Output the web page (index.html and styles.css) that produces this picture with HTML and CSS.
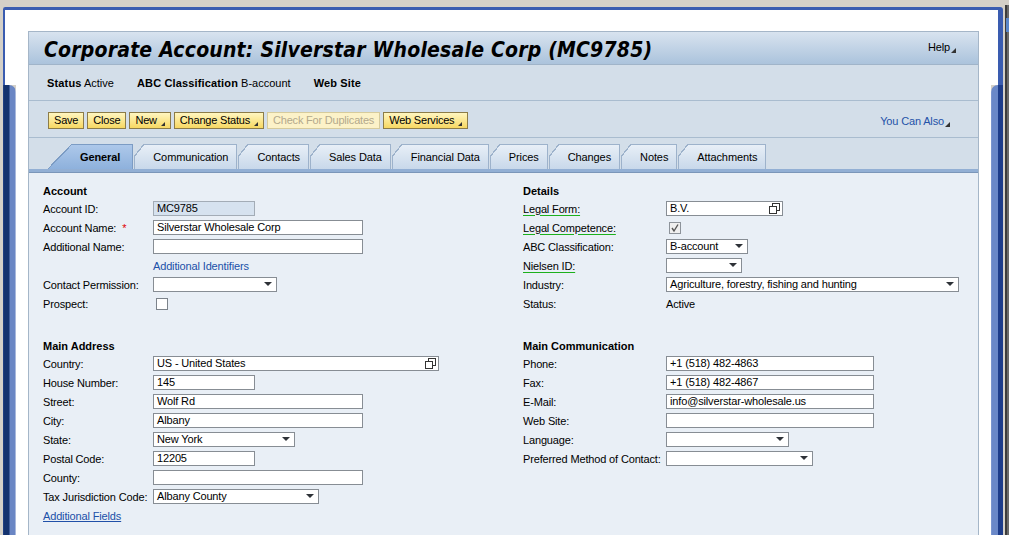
FILE: index.html
```html
<!DOCTYPE html>
<html>
<head>
<meta charset="utf-8">
<link rel="stylesheet" href="styles.css">
</head>
<body>
<div class="screen">
  <div class="win">
    <div class="win-top"></div>
    <div class="win-main">
      <div class="rail rail-l"><div class="rail-thin"></div><div class="rail-thick"></div></div>
      <div class="inner">
        <div class="panel">
          <div class="titlebar">
            <div class="title">Corporate Account: Silverstar Wholesale Corp (MC9785)</div>
            <div class="help">Help<span class="tri"></span></div>
          </div>
          <div class="statusbar">
            <span class="st"><b>Status</b> Active</span>
            <span class="st"><b>ABC Classification</b> B-account</span>
            <span class="st"><b>Web Site</b></span>
          </div>
          <div class="toolbar">
            <div class="btns">
              <span class="btn">Save</span>
              <span class="btn">Close</span>
              <span class="btn">New<span class="tri"></span></span>
              <span class="btn">Change Status<span class="tri"></span></span>
              <span class="btn disabled">Check For Duplicates</span>
              <span class="btn">Web Services<span class="tri"></span></span>
            </div>
            <div class="alsol">You Can Also<span class="tri"></span></div>
          </div>
          <div class="tabrow">
            <span class="tab sel">General</span>
            <span class="tab">Communication</span>
            <span class="tab">Contacts</span>
            <span class="tab">Sales Data</span>
            <span class="tab">Financial Data</span>
            <span class="tab">Prices</span>
            <span class="tab">Changes</span>
            <span class="tab">Notes</span>
            <span class="tab">Attachments</span>
          </div>
          <div class="band"></div>
          <div class="content">
            <div class="sec sec-l">
              <div class="hd">Account</div>
              <div class="row"><span class="lbl">Account ID:</span><span class="inp ro" style="width:102px">MC9785</span></div>
              <div class="row"><span class="lbl">Account Name: <span class="req">*</span></span><span class="inp" style="width:210px">Silverstar Wholesale Corp</span></div>
              <div class="row"><span class="lbl">Additional Name:</span><span class="inp" style="width:210px"></span></div>
              <div class="row"><span class="lbl"></span><span class="link">Additional Identifiers</span></div>
              <div class="row"><span class="lbl">Contact Permission:</span><span class="inp dd" style="width:124px"><span class="arr"></span></span></div>
              <div class="row"><span class="lbl">Prospect:</span><span class="chk"></span></div>
            </div>
            <div class="sec sec-r">
              <div class="hd">Details</div>
              <div class="row"><span class="lbl"><span class="gl">Legal Form:</span></span><span class="inp vh" style="width:117px">B.V.<svg class="vhi" width="11" height="11" viewBox="0 0 11 11"><rect x="3.5" y="0.5" width="7" height="7" fill="#fff" stroke="#333"/><rect x="0.5" y="3.5" width="7" height="7" fill="#fff" stroke="#333"/></svg></span></div>
              <div class="row"><span class="lbl"><span class="gl">Legal Competence:</span></span><span class="chk on"><svg width="10" height="10" viewBox="0 0 10 10"><path d="M2 5 L4 8 L8 1.5" fill="none" stroke="#555" stroke-width="1.4"/></svg></span></div>
              <div class="row"><span class="lbl">ABC Classification:</span><span class="inp dd" style="width:82px">B-account<span class="arr"></span></span></div>
              <div class="row"><span class="lbl"><span class="gl">Nielsen ID:</span></span><span class="inp dd" style="width:76px"><span class="arr"></span></span></div>
              <div class="row"><span class="lbl">Industry:</span><span class="inp dd" style="width:293px">Agriculture, forestry, fishing and hunting<span class="arr"></span></span></div>
              <div class="row"><span class="lbl">Status:</span><span class="txt">Active</span></div>
            </div>
            <div class="sec sec-l">
              <div class="hd">Main Address</div>
              <div class="row"><span class="lbl">Country:</span><span class="inp vh" style="width:286px">US - United States<svg class="vhi" width="11" height="11" viewBox="0 0 11 11"><rect x="3.5" y="0.5" width="7" height="7" fill="#fff" stroke="#333"/><rect x="0.5" y="3.5" width="7" height="7" fill="#fff" stroke="#333"/></svg></span></div>
              <div class="row"><span class="lbl">House Number:</span><span class="inp" style="width:102px">145</span></div>
              <div class="row"><span class="lbl">Street:</span><span class="inp" style="width:210px">Wolf Rd</span></div>
              <div class="row"><span class="lbl">City:</span><span class="inp" style="width:210px">Albany</span></div>
              <div class="row"><span class="lbl">State:</span><span class="inp dd" style="width:142px">New York<span class="arr"></span></span></div>
              <div class="row"><span class="lbl">Postal Code:</span><span class="inp" style="width:102px">12205</span></div>
              <div class="row"><span class="lbl">County:</span><span class="inp" style="width:210px"></span></div>
              <div class="row"><span class="lbl">Tax Jurisdiction Code:</span><span class="inp dd" style="width:166px">Albany County<span class="arr"></span></span></div>
              <div class="row"><span class="link ul">Additional Fields</span></div>
            </div>
            <div class="sec sec-r">
              <div class="hd">Main Communication</div>
              <div class="row"><span class="lbl">Phone:</span><span class="inp" style="width:208px">+1 (518) 482-4863</span></div>
              <div class="row"><span class="lbl">Fax:</span><span class="inp" style="width:208px">+1 (518) 482-4867</span></div>
              <div class="row"><span class="lbl">E-Mail:</span><span class="inp" style="width:208px">info@silverstar-wholesale.us</span></div>
              <div class="row"><span class="lbl">Web Site:</span><span class="inp" style="width:208px"></span></div>
              <div class="row"><span class="lbl">Language:</span><span class="inp dd" style="width:123px"><span class="arr"></span></span></div>
              <div class="row"><span class="lbl">Preferred Method of Contact:</span><span class="inp dd" style="width:147px"><span class="arr"></span></span></div>
            </div>
          </div>
        </div>
      </div>
      <div class="rail rail-r"><div class="rail-thin"></div><div class="rail-thick"></div></div>
    </div>
  </div>
  <div class="edge"><div class="edge-blue"></div></div>
</div>
</body>
</html>
```
FILE: styles.css
```css
html, body {
  margin: 0;
  padding: 0;
}
body {
  background: #d4d0c8;
  width: 1009px;
  height: 535px;
  overflow: hidden;
  font-family: "Liberation Sans", Arial, sans-serif;
  font-size: 11px;
  letter-spacing: -0.15px;
  color: #000;
}
.screen {
  display: flex;
  width: 1009px;
  height: 535px;
}
.win {
  width: 1000px;
  margin-left: 3px;
  margin-top: 7px;
  display: flex;
  flex-direction: column;
}
.win-top {
  height: 3px;
  background: #3a5cb0;
  border-top-left-radius: 4px;
  border-top-right-radius: 5px;
}
.win-main {
  flex: 1;
  display: flex;
}
.rail {
  display: flex;
  flex-direction: column;
}
.rail-l { width: 13px; }
.rail-r { width: 12px; }
.rail-thin {
  height: 75px;
  background: #fff;
}
.rail-l .rail-thin { border-left: 2px solid #3a5cb0; }
.rail-r .rail-thin { border-right: 5px solid #3a5cb0; }
.rail-thick { flex: 1; }
.rail-l .rail-thick {
  background: linear-gradient(to right, #2a4a92 0, #14326e 1px, #14326e 6px, #6a86c4 7px, #6a86c4 12px, #a8b8dc 12px);
  border-top-right-radius: 7px;
}
.rail-r .rail-thick {
  background: linear-gradient(to right, #8aa2d4 0, #6a88c8 1px, #6a88c8 7px, #1d3c8a 7px, #1d3c8a 12px);
  border-top-left-radius: 7px;
}
.inner {
  flex: 1;
  background: #fff;
  padding: 21px 12px 0 12px;
  display: flex;
}
.panel {
  flex: 1;
  border: 1px solid #a5b6c8;
  border-bottom: none;
  display: flex;
  flex-direction: column;
  background: #d3dee9;
}
.titlebar {
  height: 32px;
  border-bottom: 1px solid #a0b4c9;
  background: linear-gradient(#d8e3ef, #abc3dc);
  display: flex;
  align-items: center;
  justify-content: space-between;
  padding: 0 22px 0 15px;
}
.title {
  font-family: "DejaVu Sans Condensed", "DejaVu Sans", sans-serif;
  font-stretch: semi-condensed;
  font-weight: bold;
  font-style: italic;
  font-size: 21px;
  letter-spacing: 0.2px;
  margin-top: 3px;
}
.help {
  font-size: 11px;
  margin-top: -2px;
}
.tri {
  display: inline-block;
  width: 0;
  height: 0;
  border-left: 5px solid transparent;
  border-bottom: 5px solid #333;
  margin-left: 1px;
  vertical-align: -2px;
}
.statusbar {
  height: 35px;
  border-bottom: 1px solid #a9bccf;
  display: flex;
  align-items: center;
  gap: 23px;
  padding-left: 18px;
  letter-spacing: 0;
}
.statusbar b { letter-spacing: 0.15px; }
.toolbar {
  height: 37px;
  border-bottom: 1px solid #a9bccf;
  display: flex;
  justify-content: space-between;
  padding: 11px 28px 0 19px;
  box-sizing: border-box;
}
.btns {
  display: flex;
  gap: 3px;
  height: 17px;
}
.btn {
  height: 17px;
  box-sizing: border-box;
  border: 1px solid #8c7c48;
  background: linear-gradient(#fff6c0, #f7d862);
  padding: 0 5px;
  display: flex;
  align-items: center;
  line-height: 13px;
  letter-spacing: -0.2px;
}
.btn .tri { margin-left: 4px; align-self: flex-end; margin-bottom: 2px; border-left-width: 4px; border-bottom-width: 4px; }
.btn.disabled {
  background: #fcf2c8;
  border-color: #d6cb9c;
  color: #b3a98c;
}
.alsol {
  color: #2452a8;
  margin-top: 3px;
}
.alsol .tri { margin-left: 1px; }
.tabrow {
  height: 31px;
  box-sizing: border-box;
  display: flex;
  align-items: flex-end;
  gap: 1px;
  padding-left: 19px;
}
.tab {
  position: relative;
  height: 25px;
  box-sizing: border-box;
  border: 1px solid #9db2cb;
  border-bottom: none;
  background: linear-gradient(#e8eff7, #c8d8ea);
  padding: 0 8px 0 18px;
  display: flex;
  align-items: center;
  letter-spacing: -0.1px;
}
.tab::before {
  content: "";
  position: absolute;
  left: -1px;
  top: -1px;
  width: 10px;
  height: 13px;
  background: linear-gradient(to bottom right, #d3dee9 calc(50% - 0.6px), #9db2cb calc(50% - 0.6px), #9db2cb calc(50% + 0.6px), transparent calc(50% + 0.6px));
}
.tab.sel {
  font-weight: bold;
  border-color: #7c9cc4;
  border-left: none;
  background: linear-gradient(#adc8ea, #8eb1dc);
  padding: 0 12px 0 32px;
}
.tab.sel::before {
  left: 0;
  width: 24px;
  height: 25px;
  background: linear-gradient(to bottom right, #d3dee9 calc(50% - 0.6px), #7c9cc4 calc(50% - 0.6px), #7c9cc4 calc(50% + 0.6px), transparent calc(50% + 0.6px));
}
.band {
  height: 3px;
  background: #92afd4;
  border-bottom: 1px solid #7b96b9;
}
.content {
  flex: 1;
  background: #e9eff6;
  padding: 10px 0 0 14px;
  display: grid;
  grid-template-columns: 480px 1fr;
  grid-auto-rows: min-content;
  row-gap: 25px;
  align-content: start;
}
.hd {
  font-weight: bold;
  height: 16px;
  line-height: 16px;
  letter-spacing: 0;
}
.row {
  height: 19px;
  display: flex;
  align-items: center;
}
.sec-l .lbl { width: 110px; flex: none; }
.sec-r .lbl { width: 143px; flex: none; }
.req { color: #e00000; margin-left: 3px; }
.gl {
  text-decoration: underline;
  text-decoration-color: #1cb01c;
  text-underline-offset: 2px;
}
.inp {
  height: 15px;
  box-sizing: border-box;
  border: 1px solid #878d94;
  background: #fff;
  padding-left: 3px;
  line-height: 13px;
  display: flex;
  align-items: center;
  position: relative;
  white-space: nowrap;
}
.inp.ro {
  background: #d6e2ef;
  border-color: #a3acb6;
}
.arr {
  position: absolute;
  right: 4px;
  top: 4px;
  width: 0;
  height: 0;
  border-left: 4px solid transparent;
  border-right: 4px solid transparent;
  border-top: 4px solid #2e3238;
}
.vhi {
  position: absolute;
  right: 2px;
  top: 1px;
}
.chk {
  width: 12px;
  height: 12px;
  box-sizing: border-box;
  border: 1px solid #7c838b;
  background: #fff;
  margin-left: 3px;
  display: flex;
  align-items: center;
  justify-content: center;
}
.chk.on {
  background: #efefef;
  border-color: #8d939a;
}
.link {
  color: #2050a8;
}
.link.ul { text-decoration: underline; }
.edge {
  width: 6px;
  display: flex;
  flex-direction: column;
  padding-top: 5px;
  box-sizing: border-box;
  background: linear-gradient(to right, #d4d0c8 0, #d4d0c8 2px, #3c3c3c 2px, #3c3c3c 4px, #6a6a6a 4px);
  background-clip: content-box;
}
.edge-blue {
  height: 14px;
  margin-top: 13px;
  margin-left: 3px;
  background: #5a86c8;
}
```
